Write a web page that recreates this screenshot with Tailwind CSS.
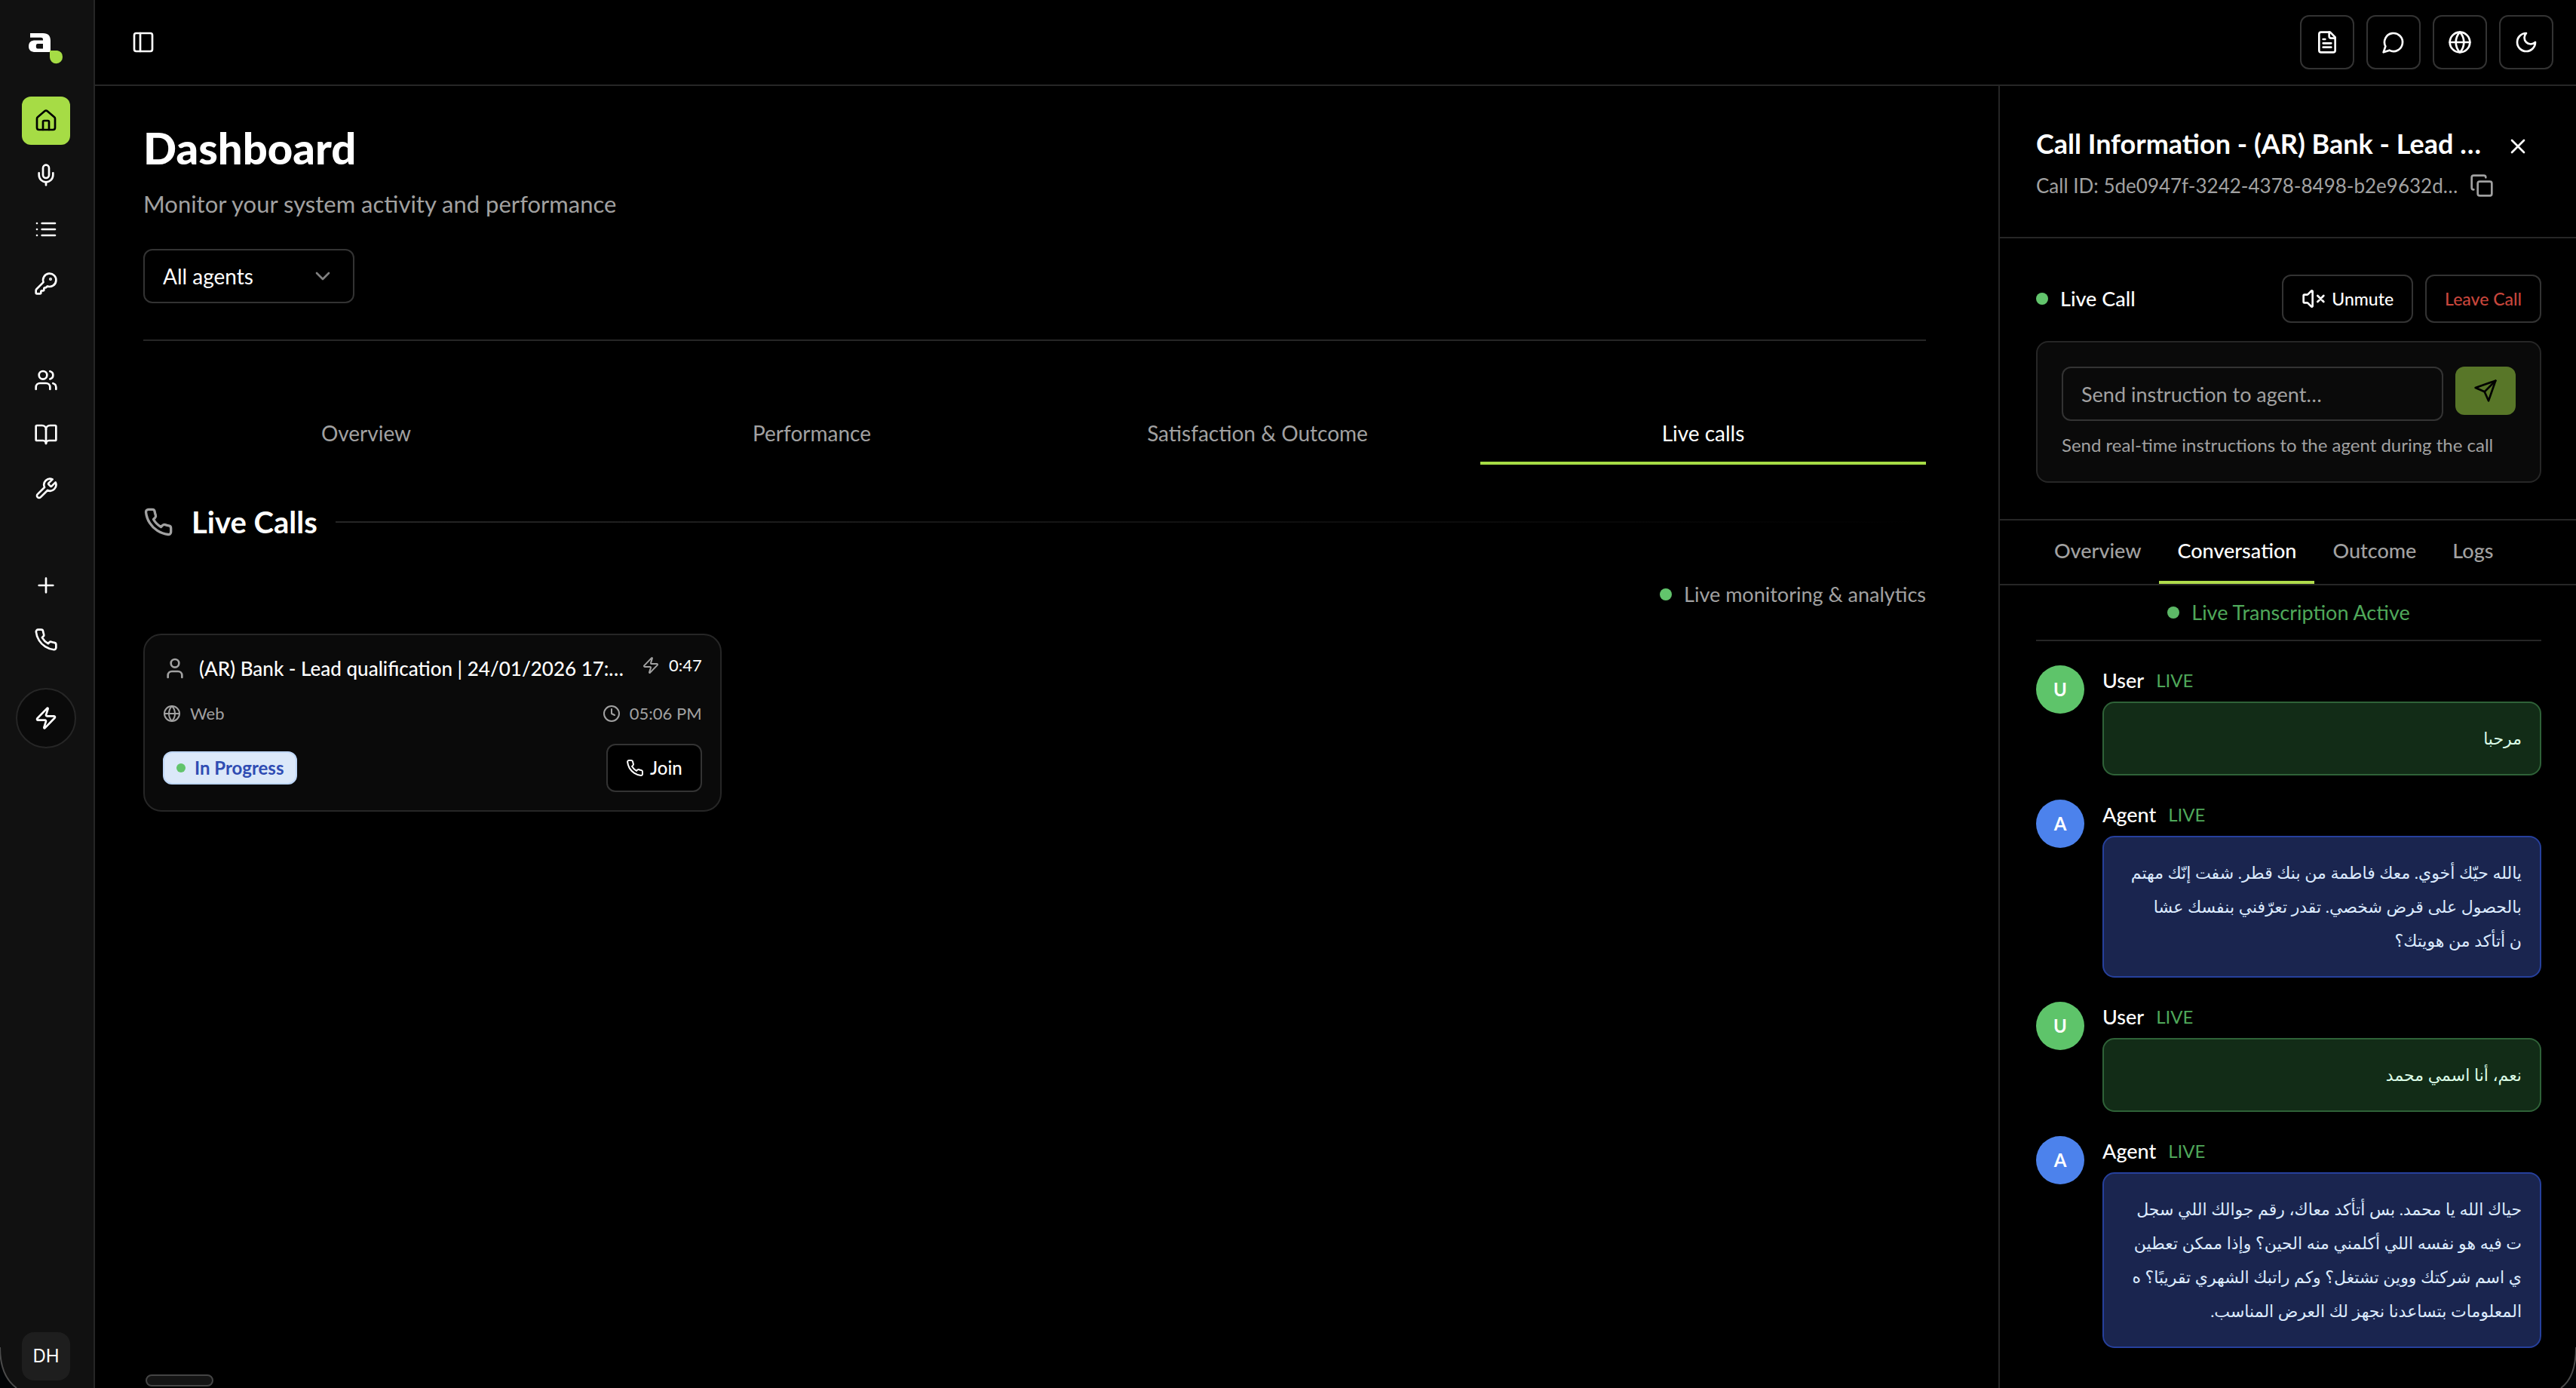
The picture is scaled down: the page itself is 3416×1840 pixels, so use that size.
<!DOCTYPE html>
<html lang="en" class="text-[32px]">
<head>
  <meta charset="UTF-8" />
  <meta name="viewport" content="width=device-width, initial-scale=1.0" />
  <title>Dashboard</title>
  <script src="https://cdn.jsdelivr.net/npm/@tailwindcss/browser@4"></script>
</head>
<body class="relative bg-black text-white font-['Lato','DejaVu_Sans',sans-serif] h-screen flex overflow-hidden">

  <!-- Icon sprite -->
  <svg class="hidden">
    <symbol id="home" viewBox="0 0 24 24"><path d="M15 21v-8a1 1 0 0 0-1-1h-4a1 1 0 0 0-1 1v8"/><path d="M3 10a2 2 0 0 1 .709-1.528l7-5.999a2 2 0 0 1 2.582 0l7 5.999A2 2 0 0 1 21 10v9a2 2 0 0 1-2 2H5a2 2 0 0 1-2-2z"/></symbol>
    <symbol id="mic" viewBox="0 0 24 24"><path d="M12 19v3"/><path d="M19 10v2a7 7 0 0 1-14 0v-2"/><rect x="9" y="2" width="6" height="13" rx="3"/></symbol>
    <symbol id="list" viewBox="0 0 24 24"><path d="M3 12h.01M3 18h.01M3 6h.01M8 12h13M8 18h13M8 6h13"/></symbol>
    <symbol id="key" viewBox="0 0 24 24"><path d="M2.586 17.414A2 2 0 0 0 2 18.828V21a1 1 0 0 0 1 1h3a1 1 0 0 0 1-1v-1a1 1 0 0 1 1-1h1a1 1 0 0 0 1-1v-1a1 1 0 0 1 1-1h.172a2 2 0 0 0 1.414-.586l.814-.814a6.5 6.5 0 1 0-4-4z"/><circle cx="16.5" cy="7.5" r=".5" fill="currentColor"/></symbol>
    <symbol id="users" viewBox="0 0 24 24"><path d="M16 21v-2a4 4 0 0 0-4-4H6a4 4 0 0 0-4 4v2"/><circle cx="9" cy="7" r="4"/><path d="M22 21v-2a4 4 0 0 0-3-3.87M16 3.13a4 4 0 0 1 0 7.75"/></symbol>
    <symbol id="book" viewBox="0 0 24 24"><path d="M12 7v14"/><path d="M3 18a1 1 0 0 1-1-1V4a1 1 0 0 1 1-1h5a4 4 0 0 1 4 4 4 4 0 0 1 4-4h5a1 1 0 0 1 1 1v13a1 1 0 0 1-1 1h-6a3 3 0 0 0-3 3 3 3 0 0 0-3-3z"/></symbol>
    <symbol id="wrench" viewBox="0 0 24 24"><path d="M14.7 6.3a1 1 0 0 0 0 1.4l1.6 1.6a1 1 0 0 0 1.4 0l3.77-3.77a6 6 0 0 1-7.94 7.94l-6.91 6.91a2.12 2.12 0 0 1-3-3l6.91-6.91a6 6 0 0 1 7.94-7.94l-3.76 3.76z"/></symbol>
    <symbol id="plus" viewBox="0 0 24 24"><path d="M5 12h14M12 5v14"/></symbol>
    <symbol id="phone" viewBox="0 0 24 24"><path d="M22 16.92v3a2 2 0 0 1-2.18 2 19.79 19.79 0 0 1-8.63-3.07 19.5 19.5 0 0 1-6-6 19.79 19.79 0 0 1-3.07-8.67A2 2 0 0 1 4.11 2h3a2 2 0 0 1 2 1.72 12.84 12.84 0 0 0 .7 2.81 2 2 0 0 1-.45 2.11L8.09 9.91a16 16 0 0 0 6 6l1.27-1.27a2 2 0 0 1 2.11-.45 12.84 12.84 0 0 0 2.81.7A2 2 0 0 1 22 16.92z"/></symbol>
    <symbol id="zap" viewBox="0 0 24 24"><path d="M4 14a1 1 0 0 1-.78-1.63l9.9-10.2a.5.5 0 0 1 .86.46l-1.92 6.02A1 1 0 0 0 13 10h7a1 1 0 0 1 .78 1.63l-9.9 10.2a.5.5 0 0 1-.86-.46l1.92-6.02A1 1 0 0 0 11 14z"/></symbol>
    <symbol id="panel" viewBox="0 0 24 24"><rect width="18" height="18" x="3" y="3" rx="2"/><path d="M9 3v18"/></symbol>
    <symbol id="file" viewBox="0 0 24 24"><path d="M15 2H6a2 2 0 0 0-2 2v16a2 2 0 0 0 2 2h12a2 2 0 0 0 2-2V7Z"/><path d="M14 2v4a2 2 0 0 0 2 2h4M10 9H8M16 13H8M16 17H8"/></symbol>
    <symbol id="chat" viewBox="0 0 24 24"><path d="M7.9 20A9 9 0 1 0 4 16.1L2 22Z"/></symbol>
    <symbol id="globe" viewBox="0 0 24 24"><circle cx="12" cy="12" r="10"/><path d="M12 2a14.5 14.5 0 0 0 0 20 14.5 14.5 0 0 0 0-20M2 12h20"/></symbol>
    <symbol id="moon" viewBox="0 0 24 24"><path d="M12 3a6 6 0 0 0 9 9 9 9 0 1 1-9-9Z"/></symbol>
    <symbol id="chevron" viewBox="0 0 24 24"><path d="m6 9 6 6 6-6"/></symbol>
    <symbol id="user" viewBox="0 0 24 24"><path d="M19 21v-2a4 4 0 0 0-4-4H9a4 4 0 0 0-4 4v2"/><circle cx="12" cy="7" r="4"/></symbol>
    <symbol id="clock" viewBox="0 0 24 24"><circle cx="12" cy="12" r="10"/><path d="M12 6v6l4 2"/></symbol>
    <symbol id="close" viewBox="0 0 24 24"><path d="M18 6 6 18M6 6l12 12"/></symbol>
    <symbol id="copy" viewBox="0 0 24 24"><rect width="14" height="14" x="8" y="8" rx="2"/><path d="M4 16c-1.1 0-2-.9-2-2V4c0-1.1.9-2 2-2h10c1.1 0 2 .9 2 2"/></symbol>
    <symbol id="muted" viewBox="0 0 24 24"><path d="M11 4.702a.705.705 0 0 0-1.203-.498L6.413 7.587A1.4 1.4 0 0 1 5.416 8H3a1 1 0 0 0-1 1v6a1 1 0 0 0 1 1h2.416a1.4 1.4 0 0 1 .997.413l3.383 3.384A.705.705 0 0 0 11 19.298zM22 9l-6 6M16 9l6 6"/></symbol>
    <symbol id="send" viewBox="0 0 24 24"><path d="m22 2-7 20-4-9-9-4Z"/><path d="M22 2 11 13"/></symbol>
  </svg>

  <!-- Sidebar -->
  <aside class="w-[126px] shrink-0 bg-[#111] border-r-2 border-[#262626] pr-[2px] pb-[10px] flex flex-col items-center">
    <div class="h-16 shrink-0 flex items-center">
      <svg class="w-[46px] h-[42px]" viewBox="0 0 46 42">
        <path fill="#fff" fill-rule="evenodd" d="M2 1H19C26 1 29 4.500 29 11V26H9C3 26 0 23.500 0 18.500C0 13 3 10.500 9 10.500H19V9.500C19 7.500 18 6.800 16 6.800H2ZM19 15H12C10.500 15 9.800 16 9.800 18.300C9.800 20.600 10.500 21.600 12 21.600H19Z"/>
        <path fill="#a6dc45" d="M28 24H38A8 8 0 0 1 45 32.500A8.500 8.500 0 0 1 28 33Z"/>
      </svg>
    </div>
    <nav class="flex-1 flex flex-col items-center gap-8 fill-none stroke-current stroke-2 [stroke-linecap:round] [stroke-linejoin:round]">
      <div class="flex flex-col gap-1">
        <a href="#" aria-label="Home" class="size-8 rounded-[12px] bg-[#a6dc45] text-black flex items-center justify-center"><svg class="size-4"><use href="#home"/></svg></a>
        <a href="#" aria-label="Agents" class="size-8 flex items-center justify-center"><svg class="size-4"><use href="#mic"/></svg></a>
        <a href="#" aria-label="Calls" class="size-8 flex items-center justify-center"><svg class="size-4"><use href="#list"/></svg></a>
        <a href="#" aria-label="API keys" class="size-8 flex items-center justify-center"><svg class="size-4"><use href="#key"/></svg></a>
      </div>
      <div class="flex flex-col gap-1">
        <a href="#" aria-label="Team" class="size-8 flex items-center justify-center"><svg class="size-4"><use href="#users"/></svg></a>
        <a href="#" aria-label="Knowledge" class="size-8 flex items-center justify-center"><svg class="size-4"><use href="#book"/></svg></a>
        <a href="#" aria-label="Tools" class="size-8 flex items-center justify-center"><svg class="size-4"><use href="#wrench"/></svg></a>
      </div>
      <div class="flex flex-col items-center gap-1">
        <button aria-label="Create" class="size-8 flex items-center justify-center"><svg class="size-4"><use href="#plus"/></svg></button>
        <button aria-label="Phone" class="size-8 flex items-center justify-center"><svg class="size-4"><use href="#phone"/></svg></button>
        <button aria-label="Quick actions" class="size-10 mt-3 rounded-full bg-[#0a0a0a] border-2 border-[#262626] flex items-center justify-center"><svg class="size-4"><use href="#zap"/></svg></button>
      </div>
    </nav>
    <button class="size-8 rounded-[16px] bg-[#1e1e1e] text-[24px] font-['Inter',sans-serif]">DH</button>
  </aside>

  <div class="flex-1 min-w-0 flex flex-col">
    <!-- Top bar -->
    <header class="h-[114px] shrink-0 border-b-2 border-[#262626] pl-6 pr-[30px] flex items-center justify-between fill-none stroke-current stroke-2 [stroke-linecap:round] [stroke-linejoin:round]">
      <button aria-label="Toggle sidebar" class="size-4"><svg class="size-4"><use href="#panel"/></svg></button>
      <div class="flex gap-2">
        <button aria-label="Docs" class="size-9 rounded-[12px] border-2 border-[#333] flex items-center justify-center"><svg class="size-4"><use href="#file"/></svg></button>
        <button aria-label="Chat" class="size-9 rounded-[12px] border-2 border-[#333] flex items-center justify-center"><svg class="size-4"><use href="#chat"/></svg></button>
        <button aria-label="Language" class="size-9 rounded-[12px] border-2 border-[#333] flex items-center justify-center"><svg class="size-4"><use href="#globe"/></svg></button>
        <button aria-label="Theme" class="size-9 rounded-[12px] border-2 border-[#333] flex items-center justify-center"><svg class="size-4"><use href="#moon"/></svg></button>
      </div>
    </header>

    <div class="flex-1 min-h-0 flex">
      <!-- Main content -->
      <main class="relative flex-1 min-w-0 pl-8 pr-12 pt-6">
        <h1 class="text-[58px] leading-[68px] font-black">Dashboard</h1>
        <p class="mt-2 text-[31px] leading-[48px] text-[#a1a1a1]">Monitor your system activity and performance</p>
        <div class="relative w-[280px] mt-[36px]">
          <select aria-label="Agents filter" class="appearance-none w-full h-9 rounded-[12px] border-2 border-[#333] bg-black px-3 text-[28px]">
            <option>All agents</option>
          </select>
          <svg class="size-4 absolute right-[26px] top-[20px] fill-none stroke-[#808080] stroke-2 pointer-events-none [stroke-linecap:round] [stroke-linejoin:round]"><use href="#chevron"/></svg>
        </div>
        <div class="mt-6 border-t-2 border-[#262626]"></div>

        <!-- Tabs -->
        <div class="mt-[84px] grid grid-cols-4 text-[28px] leading-[40px] text-[#a1a1a1]">
          <button class="py-[18px] border-b-4 border-transparent">Overview</button>
          <button class="py-[18px] border-b-4 border-transparent">Performance</button>
          <button class="py-[18px] border-b-4 border-transparent">Satisfaction &amp; Outcome</button>
          <button class="py-[18px] border-b-4 border-[#a6dc45] text-white">Live calls</button>
        </div>

        <div class="mt-6 flex items-center gap-3">
          <svg class="size-5 fill-none stroke-[#a1a1a1] stroke-2 [stroke-linecap:round] [stroke-linejoin:round]"><use href="#phone"/></svg>
          <h2 class="text-[40px] leading-[56px] font-bold">Live Calls</h2>
          <div class="flex-1 h-[2px] bg-linear-to-r from-[#262626] to-transparent"></div>
        </div>
        <div class="mt-6 flex items-center justify-end gap-2 text-[27px] leading-[40px] text-[#a1a1a1]">
          <span class="size-2 rounded-full bg-[#62c46c]"></span>
          <span>Live monitoring &amp; analytics</span>
        </div>

        <div class="mt-4 grid grid-cols-3 gap-4">
          <!-- Live call card -->
          <article class="rounded-[24px] border-2 border-[#262626] bg-[#0a0a0a] p-3 flex flex-col gap-3 text-[#a1a1a1]">
            <div class="flex items-start justify-between">
              <div class="flex items-center gap-2">
                <svg class="size-4 fill-none stroke-current stroke-2 [stroke-linecap:round] [stroke-linejoin:round]"><use href="#user"/></svg>
                <h3 class="text-[26px] leading-[40px] font-medium text-white whitespace-nowrap">(AR) Bank - Lead qualification | 24/01/2026 17:…</h3>
              </div>
              <div class="flex items-center gap-[12px] text-[22px] leading-[32px]">
                <svg class="size-3 fill-none stroke-current stroke-2 [stroke-linecap:round] [stroke-linejoin:round]"><use href="#zap"/></svg>
                <span class="text-white">0:47</span>
              </div>
            </div>
            <div class="flex justify-between text-[22px] leading-[32px]">
              <div class="flex items-center gap-[12px]">
                <svg class="size-3 fill-none stroke-current stroke-2 [stroke-linecap:round] [stroke-linejoin:round]"><use href="#globe"/></svg>
                <span>Web</span>
              </div>
              <div class="flex items-center gap-[12px]">
                <svg class="size-3 fill-none stroke-current stroke-2 [stroke-linecap:round] [stroke-linejoin:round]"><use href="#clock"/></svg>
                <span>05:06 PM</span>
              </div>
            </div>
            <div class="flex items-center justify-between">
              <span class="h-[44px] rounded-[12px] border-2 border-[#bfd7f7] bg-[#dbe8f9] px-2 flex items-center gap-[12px] text-[24px] font-bold text-[#2f4cb3]"><i class="size-[12px] rounded-full bg-[#62c46c]"></i>In Progress</span>
              <button class="h-8 rounded-[12px] border-2 border-[#333] bg-black px-3 flex items-center gap-1 text-[24px] font-medium text-white">
                <svg class="size-3 fill-none stroke-current stroke-2 [stroke-linecap:round] [stroke-linejoin:round]"><use href="#phone"/></svg>Join
              </button>
            </div>
          </article>
        </div>

        <div class="absolute left-[67px] bottom-[2px] w-[90px] h-[16px] rounded-full border-2 border-[#444] bg-[#141414]"></div>
      </main>

      <!-- Call details panel -->
      <aside class="w-[766px] shrink-0 border-l-2 border-[#262626] flex flex-col">
        <div class="pl-6 pr-[46px] py-6 border-b-2 border-[#262626] flex items-start justify-between">
          <div class="flex flex-col gap-1">
            <h2 class="text-[36px] leading-[56px] font-bold whitespace-nowrap">Call Information - (AR) Bank - Lead …</h2>
            <div class="flex items-center gap-2 text-[26px] leading-[40px] text-[#a1a1a1]">
              <span class="whitespace-nowrap">Call ID: 5de0947f-3242-4378-8498-b2e9632d…</span>
              <button aria-label="Copy call ID"><svg class="size-4 fill-none stroke-current stroke-2 [stroke-linecap:round] [stroke-linejoin:round]"><use href="#copy"/></svg></button>
            </div>
          </div>
          <button aria-label="Close" class="size-8 flex items-center justify-center"><svg class="size-4 fill-none stroke-current stroke-2 [stroke-linecap:round]"><use href="#close"/></svg></button>
        </div>

        <div class="pl-6 pr-[46px] py-6 border-b-2 border-[#262626]">
          <div class="flex items-center gap-2">
            <span class="size-2 rounded-full bg-[#62c46c]"></span>
            <span class="flex-1 text-[27px] leading-[40px] font-medium">Live Call</span>
            <button class="h-8 rounded-[12px] border-2 border-[#333] px-3 flex items-center gap-1 text-[23px] font-medium"><svg class="size-4 fill-none stroke-current stroke-2 [stroke-linecap:round] [stroke-linejoin:round]"><use href="#muted"/></svg>Unmute</button>
            <button class="h-8 rounded-[12px] border-2 border-[#333] px-3 text-[23px] font-medium text-[#c8463c]">Leave Call</button>
          </div>
          <div class="mt-3 rounded-[16px] border-2 border-[#262626] bg-[#0a0a0a] p-4">
            <div class="flex items-start gap-2">
              <input type="text" aria-label="Instruction" placeholder="Send instruction to agent…" class="flex-1 min-w-0 h-9 rounded-[12px] border-2 border-[#333] px-3 text-[27px] placeholder:text-[#a1a1a1]" />
              <button aria-label="Send" class="w-10 h-8 rounded-[12px] bg-[#587628] text-black flex items-center justify-center"><svg class="size-4 fill-none stroke-current stroke-2 [stroke-linecap:round] [stroke-linejoin:round]"><use href="#send"/></svg></button>
            </div>
            <p class="mt-2 text-[24px] leading-[32px] text-[#a1a1a1] whitespace-nowrap">Send real-time instructions to the agent during the call</p>
          </div>
        </div>

        <div class="pl-6 border-b-2 border-[#262626] flex text-[27px] leading-[40px] font-medium text-[#a1a1a1]">
          <button class="px-3 py-[20px] border-b-4 border-transparent">Overview</button>
          <button class="px-3 py-[20px] border-b-4 border-[#b0dc4c] text-white">Conversation</button>
          <button class="px-3 py-[20px] border-b-4 border-transparent">Outcome</button>
          <button class="px-3 py-[20px] border-b-4 border-transparent">Logs</button>
        </div>

        <div class="flex-1 min-h-0 overflow-hidden pl-6 pr-[46px]">
          <div class="h-[74px] border-b-2 border-[#262626] flex items-center justify-center gap-2 text-[27px] text-[#4fa85a]">
            <span class="size-2 rounded-full bg-[#5cb866]"></span>
            <span>Live Transcription Active</span>
          </div>
          <div class="mt-4 flex flex-col gap-4">
            <div class="flex gap-3">
              <span class="size-8 shrink-0 rounded-full bg-[#5ec46a] flex items-center justify-center text-[24px] font-bold">U</span>
              <div class="flex-1 min-w-0">
                <div class="flex items-center gap-2 mb-1 leading-[40px]"><span class="text-[27px] font-medium">User</span><span class="text-[24px] text-[#4fa85a]">LIVE</span></div>
                <p dir="rtl" lang="ar" class="rounded-[16px] border-2 border-[#2f6238] bg-[#122c17] text-[#dcfce7] px-3 pt-3 pb-[25px] text-[22px] leading-[45px] whitespace-nowrap">مرحبا</p>
              </div>
            </div>
            <div class="flex gap-3">
              <span class="size-8 shrink-0 rounded-full bg-[#4c82ec] flex items-center justify-center text-[24px] font-bold">A</span>
              <div class="flex-1 min-w-0">
                <div class="flex items-center gap-2 mb-1 leading-[40px]"><span class="text-[27px] font-medium">Agent</span><span class="text-[24px] text-[#4fa85a]">LIVE</span></div>
                <p dir="rtl" lang="ar" class="rounded-[16px] border-2 border-[#26409c] bg-[#1a254f] text-[#dbeafe] px-3 pt-3 pb-[25px] text-[22px] leading-[45px] whitespace-nowrap">يالله حيّك أخوي. معك فاطمة من بنك قطر. شفت إنّك مهتم<br>بالحصول على قرض شخصي. تقدر تعرّفني بنفسك عشا<br>ن أتأكد من هويتك؟</p>
              </div>
            </div>
            <div class="flex gap-3">
              <span class="size-8 shrink-0 rounded-full bg-[#5ec46a] flex items-center justify-center text-[24px] font-bold">U</span>
              <div class="flex-1 min-w-0">
                <div class="flex items-center gap-2 mb-1 leading-[40px]"><span class="text-[27px] font-medium">User</span><span class="text-[24px] text-[#4fa85a]">LIVE</span></div>
                <p dir="rtl" lang="ar" class="rounded-[16px] border-2 border-[#2f6238] bg-[#122c17] text-[#dcfce7] px-3 pt-3 pb-[25px] text-[22px] leading-[45px] whitespace-nowrap">نعم، أنا اسمي محمد</p>
              </div>
            </div>
            <div class="flex gap-3">
              <span class="size-8 shrink-0 rounded-full bg-[#4c82ec] flex items-center justify-center text-[24px] font-bold">A</span>
              <div class="flex-1 min-w-0">
                <div class="flex items-center gap-2 mb-1 leading-[40px]"><span class="text-[27px] font-medium">Agent</span><span class="text-[24px] text-[#4fa85a]">LIVE</span></div>
                <p dir="rtl" lang="ar" class="rounded-[16px] border-2 border-[#26409c] bg-[#1a254f] text-[#dbeafe] px-3 pt-3 pb-[25px] text-[22px] leading-[45px] whitespace-nowrap">حياك الله يا محمد. بس أتأكد معاك، رقم جوالك اللي سجل<br>ت فيه هو نفسه اللي أكلمني منه الحين؟ وإذا ممكن تعطين<br>ي اسم شركتك ووين تشتغل؟ وكم راتبك الشهري تقريبًا؟ ه<br>المعلومات بتساعدنا نجهز لك العرض المناسب.</p>
              </div>
            </div>
          </div>
        </div>
      </aside>
    </div>
  </div>

  <!-- Rounded window corners -->
  <svg class="absolute left-0 bottom-0 w-[24px] h-[54px] pointer-events-none" viewBox="0 0 24 54"><path d="M0 0C0 26 8 44 22 54H0Z" fill="#020406"/><path d="M0 0C0 26 8 44 22 54" fill="none" stroke="#4a4a4a" stroke-width="2"/></svg>
  <svg class="absolute right-0 bottom-0 w-[24px] h-[54px] pointer-events-none" viewBox="0 0 24 54"><path d="M24 0C24 26 18 44 4 54H24Z" fill="#020406"/><path d="M24 0C24 26 18 44 4 54" fill="none" stroke="#4a4a4a" stroke-width="2"/></svg>
</body>
</html>
